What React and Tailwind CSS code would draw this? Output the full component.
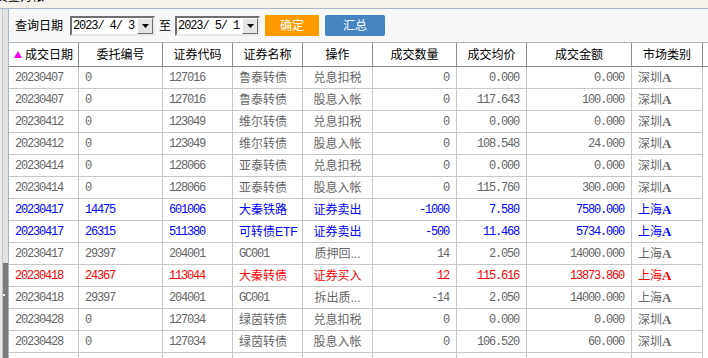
import React from 'react';

const G = 'text-[#666666]';
const B = 'text-[#0000ff]';
const R = 'text-[#ff0000]';

const rows = [
  ['20230407', '0', '127016', '鲁泰转债', '兑息扣税', '0', '0.000', '0.000', '深圳', G],
  ['20230407', '0', '127016', '鲁泰转债', '股息入帐', '0', '117.643', '100.000', '深圳', G],
  ['20230412', '0', '123049', '维尔转债', '兑息扣税', '0', '0.000', '0.000', '深圳', G],
  ['20230412', '0', '123049', '维尔转债', '股息入帐', '0', '108.548', '24.000', '深圳', G],
  ['20230414', '0', '128066', '亚泰转债', '兑息扣税', '0', '0.000', '0.000', '深圳', G],
  ['20230414', '0', '128066', '亚泰转债', '股息入帐', '0', '115.760', '300.000', '深圳', G],
  ['20230417', '14475', '601006', '大秦铁路', '证券卖出', '-1000', '7.580', '7580.000', '上海', B],
  ['20230417', '26315', '511380', '可转债ETF', '证券卖出', '-500', '11.468', '5734.000', '上海', B],
  ['20230417', '29397', '204001', 'GC001', '质押回...', '14', '2.050', '14000.000', '上海', G],
  ['20230418', '24367', '113044', '大秦转债', '证券买入', '12', '115.616', '13873.860', '上海', R],
  ['20230418', '29397', '204001', 'GC001', '拆出质...', '-14', '2.050', '14000.000', '上海', G],
  ['20230428', '0', '127034', '绿茵转债', '兑息扣税', '0', '0.000', '0.000', '深圳', G],
  ['20230428', '0', '127034', '绿茵转债', '股息入帐', '0', '106.520', '60.000', '深圳', G],
];

const headers = ['成交日期', '委托编号', '证券代码', '证券名称', '操作', '成交数量', '成交均价', '成交金额', '市场类别'];

const grid = 'grid grid-cols-[70px_84px_70px_70px_70px_84px_70px_105px_71px_1fr]';
const mono = "font-['Liberation_Mono','Noto_Sans_CJK_SC',monospace] text-[12px] tracking-[-1.2px]";

const DateBox = ({ value }) => (
  <div className="flex items-center w-[85px] h-[20px] bg-white border-2 border-t-[#6f6f6f] border-l-[#6f6f6f] border-b-[#e8e8e8] border-r-[#e8e8e8]">
    <span className="flex-1 pl-[1px] font-['Liberation_Mono',monospace] text-[12px] tracking-[-1.1px] text-black whitespace-pre leading-none">
      {value}
    </span>
    <div className="w-[16px] h-[16px] flex items-center justify-center bg-[#e4e4e4] border border-t-white border-l-white border-b-[#707070] border-r-[#707070]">
      <svg width="7" height="4" viewBox="0 0 7 4"><path d="M0 0h7L3.5 4z" fill="#000" /></svg>
    </div>
  </div>
);

const Cell = ({ i, children, color, isMono }) => {
  const align = i === 4 ? 'justify-center' : i >= 5 && i <= 7 ? 'justify-end pr-[7px]' : 'pl-[6px]';
  const numeric = isMono || i <= 2 || (i >= 5 && i <= 7);
  return (
    <div className={`flex items-center pt-[1px] h-[22px] border-r border-b border-[#c8c8c8] overflow-hidden whitespace-nowrap ${align} ${color} ${numeric ? mono : 'text-[12px]'}`}>
      {children}
    </div>
  );
};

export default function App() {
  return (
    <div className="w-[708px] h-[358px] overflow-hidden bg-white font-['Liberation_Sans','Noto_Sans_CJK_SC',sans-serif] flex flex-col">
      <div className="h-[9px] shrink-0 bg-[#f5f2eb] border-b border-[#a9b7ca] overflow-hidden">
        <div className="-mt-[10px] -ml-[4px] text-[12px] text-black leading-[14px]">资金对帐</div>
      </div>
      <div className="flex flex-1 min-h-0">
        <div className="w-[8px] shrink-0 flex">
          <div className="w-[2px] bg-[#e9e9e9]" />
          <div className="w-[1px] bg-[#c4c4c4]" />
          <div className="flex-1 flex flex-col">
            <div className="flex-1 bg-[#e2e2e2]" />
            <div className="h-[95px] bg-[#7b7b7b] flex items-start pt-[31px]">
              <div className="w-[2px] h-[2px] bg-white" />
            </div>
          </div>
        </div>
        <div className="flex-1 flex flex-col border-l border-[#a9b7ca] min-w-0">
          <div className="h-[33px] shrink-0 bg-[#f7f7f7] flex items-center pl-[6px] text-[12px] text-black">
            <span className="mr-[7px]">查询日期</span>
            <DateBox value="2023/ 4/ 3" />
            <span className="mx-[4px]">至</span>
            <DateBox value="2023/ 5/ 1" />
            <button className="ml-[5px] w-[54px] h-[21px] bg-[#ff9a00] text-white text-[12px]">确定</button>
            <button className="ml-[6px] w-[60px] h-[21px] bg-[#4586c2] rounded-[2px] text-white text-[12px]">汇总</button>
          </div>
          <div className={`${grid} h-[25px] shrink-0 bg-white border-t border-b border-t-[#a9b3c2] border-b-[#868686] text-[12px] text-black`}>
            {headers.map((h, i) => (
              <div key={h} className="flex items-center justify-center border-r border-[#8c8c8c]">
                {i === 0 && (
                  <svg width="8" height="7" viewBox="0 0 8 7" className="mr-[3px]"><path d="M4 0l4 7H0z" fill="#ff00ff" /></svg>
                )}
                {h}
              </div>
            ))}
            <div />
          </div>
          {rows.map((r, k) => (
            <div key={k} className={`${grid} shrink-0`}>
              {r.slice(0, 8).map((v, i) => (
                <Cell key={i} i={i} color={r[9]} isMono={v === 'GC001'}>{v}</Cell>
              ))}
              <Cell i={8} color={r[9]}>
                {r[8]}
                <b className="font-['Liberation_Serif',serif] text-[13px]">A</b>
              </Cell>
              <div />
            </div>
          ))}
          <div className={`${grid} shrink-0`}>
            {headers.map((h) => (
              <div key={h} className="h-[22px] border-r border-[#c8c8c8]" />
            ))}
          </div>
        </div>
      </div>
    </div>
  );
}
